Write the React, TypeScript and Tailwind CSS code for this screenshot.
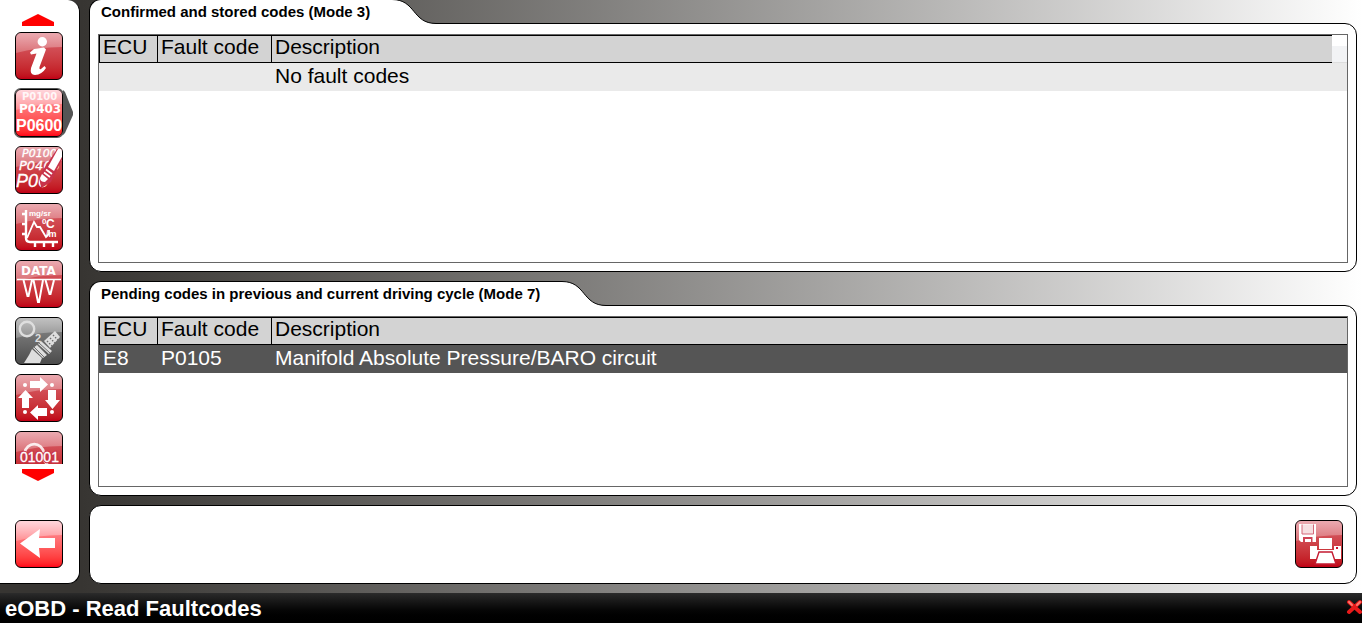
import type { ReactNode } from "react";
import clsx from "clsx";

type Tone = "red" | "bright" | "grey";

const tones: Record<Tone, string> = {
  red: "from-[#da6470] to-[#c00016]",
  bright: "from-[#ff96a4] to-[#ff0018]",
  grey: "from-[#8e8e8e] to-[#4c4c4c]",
};

const iconFont = "'Liberation Sans', Arial, sans-serif";
const wideFont = "'DejaVu Sans', Verdana, sans-serif";

function IconButton({ label, tone = "red", active, children }: { label: string; tone?: Tone; active?: boolean; children: ReactNode }) {
  return (
    <button
      type="button"
      aria-label={label}
      className={clsx(
        "relative block w-12 h-12 shrink-0 rounded-md border border-black bg-gradient-to-b",
        tones[tone],
        active && "ring-1 ring-[#555]"
      )}
    >
      {active && (
        <svg width="10" height="50" viewBox="0 0 10 50" className="absolute -top-0.5 left-[47px]" aria-hidden="true">
          <path d="M0 2 L2 4 L10 24 V27 L2 45 L0 47 Z" fill="#555" />
        </svg>
      )}
      <svg width="46" height="46" viewBox="1 1 46 46" className="relative block rounded-[5px]" aria-hidden="true">
        <defs>
          <linearGradient id={`gloss-${tone}`} x1="0" y1="0" x2="0" y2="1">
            <stop offset="0" stopColor="#fff" stopOpacity={tone === "bright" ? 0.6 : 0.45} />
            <stop offset="1" stopColor="#fff" stopOpacity="0.22" />
          </linearGradient>
        </defs>
        <path d="M1 1 H47 V15 Q22 15 1 21 Z" fill={`url(#gloss-${tone})`} />
        {children}
      </svg>
    </button>
  );
}

function InfoIcon() {
  return (
    <g fill="#fff">
      <circle cx="27.300" cy="9.700" r="4.700" />
      <path d="M15 20.500 L19 17 L29 15.500 L31 17.500 L24.500 35 Q24 38 26 37 L29.500 34 L31 36 Q27 42.500 20 43 Q14.500 43 16 36 L21.500 21.500 L16 22.500 Z" />
    </g>
  );
}

function CodesIcon() {
  return (
    <g fill="#fff">
      <text x="7" y="11" fontSize="10" fontFamily={wideFont} fontWeight="700" opacity="0.85">P0100</text>
      <text x="4" y="24" fontSize="12" fontFamily={wideFont} fontWeight="700">P0403</text>
      <text x="1" y="42" fontSize="16" fontFamily={iconFont} fontWeight="700">P0600</text>
    </g>
  );
}

function ClearCodesIcon() {
  return (
    <g>
      <g fill="#fff" stroke="#fff" strokeWidth="0.3" fontStyle="italic">
        <text x="7" y="11" fontSize="11" fontFamily={wideFont}>P0100</text>
        <text x="4" y="24" fontSize="13" fontFamily={wideFont}>P0403</text>
        <text x="1" y="41" fontSize="18" fontFamily={iconFont}>P06</text>
      </g>
      <path d="M24 31 L30 21 L42 3 L49 3 V9 L36 36 L28 41 H26 Z" fill="#c8334a" />
      <path d="M33 21 L43 3 L48 3 V9 L39 25 Z" fill="#fff" />
      <path d="M31 23.500 L37 28 M29 26.500 L35 31" stroke="#fff" strokeWidth="1.8" />
      <path d="M27 28 L33 33 L30 36 Q25 36 25 32 Z" fill="#fff" />
    </g>
  );
}

function MeasureIcon() {
  return (
    <g>
      <path d="M11 7 V35 Q11 39 15 39 H43 M7 11 H11 M7 21 H11 M7 31 H11 M20 39 V44 M29 39 V44 M38 39 V44" fill="none" stroke="#fff" strokeWidth="2.4" />
      <path d="M12 35 L19 19 L22 24 L25 24 L31 34 L34 31 V27" fill="none" stroke="#fff" strokeWidth="1.8" />
      <g fill="#fff" fontFamily={iconFont} fontWeight="700">
        <text x="14" y="13" fontSize="8">mg/sr</text>
        <text x="27" y="21" fontSize="8">0</text>
        <text x="31" y="25" fontSize="12">C</text>
        <text x="31" y="34" fontSize="9">/m</text>
      </g>
    </g>
  );
}

function DataIcon() {
  return (
    <g fill="none" stroke="#fff">
      <text x="6" y="15" fontSize="12" fontFamily={wideFont} fontWeight="700" fill="#fff" stroke="none">DATA</text>
      <path d="M2 19.500 H46" strokeWidth="1.4" />
      <path d="M8.500 20 L12.500 36 H13.500 L17 20 M18.500 20 L23 42 H24 L28 20 M30.500 20 L34.500 34 H35.500 L39 20" strokeWidth="2" />
    </g>
  );
}

function LambdaIcon() {
  return (
    <g fill="#dedede">
      <circle cx="12" cy="12" r="7.200" fill="none" stroke="#dedede" strokeWidth="2.4" />
      <text x="20" y="25" fontSize="11" fontFamily={iconFont} fontWeight="700">2</text>
      <path d="M29 24 L40 14 L45 20 L35 31 Z" />
      <path d="M26 24 L37 34 L34 37 L23 27 Z M22 28 L32 38 L28 41 L18 31 Z M17 32 L27 41 L25 46 H9 L14 38 Z" />
      <path d="M24 26 L35 36 M19 30 L29 40" stroke="#707070" />
      <path d="M32 24 L37 29 M35 21 L40 26 M38 18 L43 23" stroke="#707070" strokeWidth="1.4" strokeDasharray="1.500 1.500" />
    </g>
  );
}

function CycleIcon() {
  return (
    <g fill="#fff">
      <path d="M15 7 H25 V3 L33 10.500 L25 18 V14 H15 Z" />
      <path d="M33 16 H41 V26 H45 L37.500 35 L30 26 H33 Z" />
      <path d="M32 34 V42 H23 V46 L15 38.500 L23 31 V34 Z" />
      <path d="M7 34 V24 H3 L10.500 16 L18 24 H14 V34 Z" />
      <circle cx="10" cy="11" r="2" />
      <circle cx="37" cy="11" r="2" />
      <circle cx="10" cy="38" r="2" />
      <circle cx="37" cy="38" r="2" />
    </g>
  );
}

function BinaryIcon() {
  return (
    <g>
      <path d="M9.500 22 A10 11.500 0 0 1 29 22 V29 L34 36" fill="none" stroke="#fff" strokeOpacity="0.85" strokeWidth="2.8" />
      <text x="5" y="31" fontSize="14" fontFamily={iconFont} fill="none" stroke="#c8334a" strokeWidth="2.4">01001</text>
      <text x="5" y="31" fontSize="14" fontFamily={iconFont} fill="#fff" stroke="#fff" strokeWidth="0.3">01001</text>
    </g>
  );
}

function BackIcon() {
  return <path d="M5 23.500 L25 9 L24 18 H40 V28 H24 L25 38 Z" fill="#fff" />;
}

function SavePrintIcon() {
  return (
    <g>
      <path d="M4 4 H21 V22 H6 L4 20 Z" fill="#fff" />
      <path d="M7 4.500 V14 H18.500 V4.500" fill="#f6dfe1" stroke="#d4697a" />
      <path d="M8 22 V17 H17.500 V22 Z" fill="#cf4556" />
      <path d="M10 22 V19 H16 V22 Z" fill="#fff" />
      <g fill="#fff">
        <path d="M24 18 H37 V29 H24 Z" />
        <path d="M15 26 H22 V30 H39 V26 H46 V39 H15 Z" />
      </g>
      <path d="M24 32 H37 L41 44 H20 Z" fill="#fff" stroke="#c41a30" strokeWidth="1.400" />
      <path d="M41 28 H43" stroke="#c8102e" strokeWidth="2" />
    </g>
  );
}

const menu: { label: string; icon: ReactNode; tone?: Tone; active?: boolean }[] = [
  { label: "Information", icon: <InfoIcon /> },
  { label: "Read fault codes", icon: <CodesIcon />, tone: "bright", active: true },
  { label: "Clear fault codes", icon: <ClearCodesIcon /> },
  { label: "Parameters", icon: <MeasureIcon /> },
  { label: "Freeze frame data", icon: <DataIcon /> },
  { label: "Oxygen sensor", icon: <LambdaIcon />, tone: "grey" },
  { label: "Readiness tests", icon: <CycleIcon /> },
  { label: "Identification", icon: <BinaryIcon /> },
];

function Sidebar() {
  return (
    <nav className="w-20 mb-[9px] shrink-0 flex flex-col bg-white border-r border-b border-black rounded-r-xl pt-3.5 pb-[15px]">
      <button type="button" aria-label="Scroll up" className="ml-[22px] w-8 h-3 shrink-0">
        <svg width="32" height="12" viewBox="0 0 32 12" className="block"><path d="M0 8 L16 0 L32 8 V12 H0 Z" fill="#f00" /></svg>
      </button>
      <div className="mt-1 pt-0.5 pl-[15px] flex flex-col gap-[9px] h-[434px] shrink-0 overflow-hidden">
        {menu.map((m) => (
          <IconButton key={m.label} label={m.label} tone={m.tone} active={m.active}>{m.icon}</IconButton>
        ))}
      </div>
      <button type="button" aria-label="Scroll down" className="mt-[5px] ml-[22px] w-8 h-3 shrink-0">
        <svg width="32" height="12" viewBox="0 0 32 12" className="block"><path d="M0 0 H32 V4 L16 12 L0 4 Z" fill="#f00" /></svg>
      </button>
      <div className="mt-auto pl-[15px]">
        <IconButton label="Back" tone="bright"><BackIcon /></IconButton>
      </div>
    </nav>
  );
}

type Fault = { ecu: string; code: string; description: string };

function FaultPanel({ title, rows, scrollGap, className }: { title: string; rows: Fault[]; scrollGap?: boolean; className?: string }) {
  return (
    <section className={clsx("flex flex-col min-h-0", className)}>
      {/* Tab, overlaps the body's top border */}
      <div className="relative flex h-[25px] -mb-px shrink-0">
        <h2 className="bg-white border-t border-l border-black rounded-tl-xl pl-[11px] pr-[22px] text-[15px] leading-6 font-bold whitespace-nowrap">{title}</h2>
        <svg width="44" height="25" viewBox="0 0 44 25" className="block shrink-0" aria-hidden="true">
          <path d="M0 0.500 C24 0.500 20 24.500 44 24.500 V25 H0 Z" fill="#fff" />
          <path d="M0 0.500 C24 0.500 20 24.500 44 24.500" fill="none" stroke="#000" />
        </svg>
      </div>
      <div className="flex-1 min-h-0 bg-white border border-black rounded-xl rounded-tl-none pt-2.5 px-2 pb-2">
        <div className="h-full overflow-hidden border border-[#666]">
          <table className="w-full table-fixed border-separate border-spacing-0 text-left text-[21px] leading-6">
            <colgroup>
              <col className="w-[59px]" />
              <col className="w-[114px]" />
              <col />
              {scrollGap && <col className="w-[15px]" />}
            </colgroup>
            <thead>
              <tr className="h-7 bg-[#d3d3d3]">
                <th scope="col" className="p-0 pb-1 pl-[3px] leading-[22px] font-normal whitespace-nowrap border-y border-x border-black">ECU</th>
                <th scope="col" className="p-0 pb-1 pl-[3px] leading-[22px] font-normal whitespace-nowrap border-y border-r border-black">Fault code</th>
                <th scope="col" className="p-0 pb-1 pl-[3px] leading-[22px] font-normal whitespace-nowrap border-y border-black">Description</th>
                {scrollGap && <td className="p-0 bg-gradient-to-b from-white from-40% to-[#f2f3f5] to-40% border-b border-[#ddd]" />}
              </tr>
            </thead>
            <tbody>
              {rows.map((r, i) => (
                <tr key={i} className={clsx("h-7", r.code ? "bg-[#555] text-white" : "bg-[#eaeaea]")}>
                  <td className="p-0 pb-0.5 pl-1">{r.ecu}</td>
                  <td className="p-0 pb-0.5 pl-[3px]">{r.code}</td>
                  <td className="p-0 pb-0.5 pl-[3px]" colSpan={scrollGap ? 2 : 1}>{r.description}</td>
                </tr>
              ))}
            </tbody>
          </table>
        </div>
      </div>
    </section>
  );
}

export default function App() {
  return (
    <div className="h-screen min-h-[600px] flex flex-col overflow-hidden text-black font-['Liberation_Sans',Arial,sans-serif]">
      <div className="flex-1 min-h-0 flex bg-linear-to-r from-[#373532] from-6% to-white">
        <Sidebar />
        <main className="flex-1 min-w-0 flex flex-col gap-[9px] -mt-px ml-[9px] mr-[5px] mb-[9px]">
          <FaultPanel
            className="flex-[273]"
            title="Confirmed and stored codes (Mode 3)"
            rows={[{ ecu: "", code: "", description: "No fault codes" }]}
            scrollGap
          />
          <FaultPanel
            className="flex-[215]"
            title="Pending codes in previous and current driving cycle (Mode 7)"
            rows={[{ ecu: "E8", code: "P0105", description: "Manifold Absolute Pressure/BARO circuit" }]}
          />
          <div className="shrink-0 flex justify-end bg-white border border-black rounded-xl pt-3.5 pb-[15px] pr-[13px]">
            <IconButton label="Save or print"><SavePrintIcon /></IconButton>
          </div>
        </main>
      </div>
      <footer className="h-[30px] shrink-0 flex items-center justify-between pl-[5px] bg-gradient-to-b from-[#2b2b2b] to-black text-white">
        <h1 className="pt-0.5 text-[22px] leading-7 font-bold">eOBD - Read Faultcodes</h1>
        <button type="button" aria-label="Close" className="mb-0.5">
          <svg width="16" height="16" viewBox="0 0 16 16" className="block">
            <path d="M3 3 L14 13 M14 3 L3 13" stroke="#e81a1a" strokeWidth="4" strokeLinecap="round" />
            <path d="M3 3 L6 6 M14 3 L11 6" stroke="#ff7a70" strokeWidth="2" strokeLinecap="round" />
          </svg>
        </button>
      </footer>
    </div>
  );
}
